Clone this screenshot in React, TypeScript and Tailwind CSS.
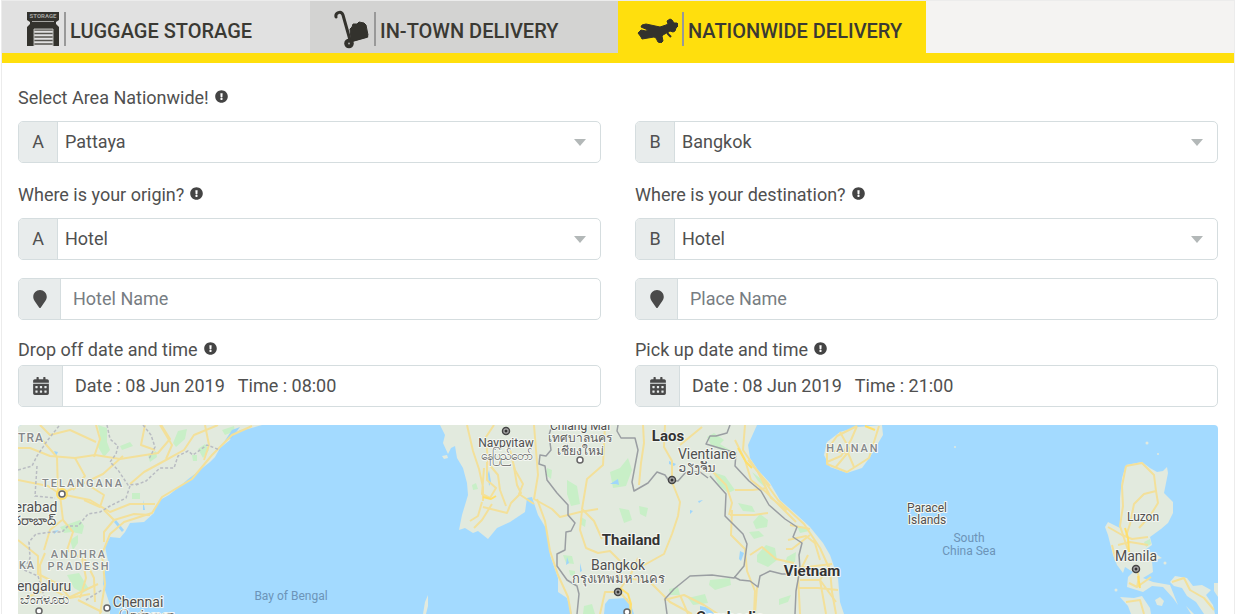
import type { ReactNode } from "react";
import { FaCalendarAlt, FaExclamationCircle, FaMapMarker } from "react-icons/fa";

function StorageIcon() {
  return (
    <svg width="34" height="36" viewBox="0 0 34 36" aria-hidden="true" className="-mt-1">
      <path d="M1 1h32v8l-3 2v2l3 3v19h-6V18H8v17H1V16l3-3v-2l-3-2z" fill="#33322d" />
      <path d="M6 10.500h22" stroke="#a5a5a2" strokeWidth="1" />
      <path d="M8 19h19M8 22.500h19M8 26h19M8 29.500h19M8 33h19" stroke="#55544f" strokeWidth="1.500" />
      <path d="M8 35V18h19v17" fill="none" stroke="#b9b9b6" strokeWidth="1" />
      <text x="17" y="7" textAnchor="middle" fontSize="6" fontWeight="700" fill="#a5a5a2">
        STORAGE
      </text>
    </svg>
  );
}

function TrolleyIcon() {
  return (
    <svg width="36" height="39" viewBox="0 0 36 39" aria-hidden="true" className="-mt-1">
      <path d="M2 7C1 3 7 0 9 5l7 25" fill="none" stroke="#33322d" strokeWidth="3" strokeLinecap="round" />
      <path d="M17 31l16-4.500" stroke="#33322d" strokeWidth="2.500" strokeLinecap="round" />
      <path d="M16 19l2-2 1-3 4 0 2-2 5 1 2 2 2 10-1 2-14 4-2-2z" fill="#33322d" stroke="#33322d" strokeLinejoin="round" />
      <circle cx="15" cy="33.500" r="4.800" fill="#33322d" />
      <circle cx="15" cy="33.500" r="1" fill="#a9a9a6" />
    </svg>
  );
}

function PlaneIcon() {
  return (
    <svg width="42" height="28" viewBox="0 0 42 28" aria-hidden="true" className="-mt-1">
      <path
        d="M2 18l3-3 5 1 2-1-7-3 1-2 4-1 14 3 6-2 2-1-1-3 3-2 2 1 2 3 3 0 2 2-3 3-1 3-2 1-3-1-7 4-1 1 1 5-2 2-3-1-2-4-2-1-12 2-1-2z"
        fill="#33322d"
        stroke="#33322d"
        strokeLinejoin="round"
      />
      <path d="M31 16l1 3 3 3" fill="none" stroke="#33322d" strokeWidth="2" />
    </svg>
  );
}

const tabs = [
  { title: "LUGGAGE STORAGE", icon: <StorageIcon />, style: "bg-[#e1e1e1] pl-6", active: false },
  { title: "IN-TOWN DELIVERY", icon: <TrolleyIcon />, style: "bg-[#d3d3d2] pl-6", active: false },
  { title: "NATIONWIDE DELIVERY", icon: <PlaneIcon />, style: "bg-[#ffdf0d] pl-[18px]", active: true },
];

function FieldLabel({ htmlFor, children }: { htmlFor: string; children: ReactNode }) {
  return (
    <label htmlFor={htmlFor} className="flex h-6 items-center gap-1.5">
      {children}
      <FaExclamationCircle className="mb-1 size-[13px] text-[#444]" />
    </label>
  );
}

function Group({ addon, width, children }: { addon: ReactNode; width: string; children: ReactNode }) {
  return (
    <div className="flex h-[42px] overflow-hidden rounded-[5px] border border-[#d5dddf] bg-white">
      <span className={`${width} flex shrink-0 items-center justify-center border-r border-[#d5dddf] bg-[#e8ecec]`}>
        {addon}
      </span>
      {children}
    </div>
  );
}

function SelectBox({ id, letter, label, options }: { id: string; letter: string; label?: string; options: string[] }) {
  return (
    <Group addon={letter} width="w-[39px]">
      <div className="relative flex-1">
        <select id={id} aria-label={label} className="h-full w-full appearance-none bg-transparent pr-10 pl-[7px] outline-none">
          {options.map((o) => (
            <option key={o}>{o}</option>
          ))}
        </select>
        <svg className="pointer-events-none absolute top-4 right-[14px]" width="12" height="8" viewBox="0 0 12 8" aria-hidden="true">
          <path d="M0 1h12L6 8z" fill="#b3b8b8" />
        </svg>
      </div>
    </Group>
  );
}

function PlaceInput({ label }: { label: string }) {
  return (
    <Group addon={<FaMapMarker className="size-[18px] text-[#4a4a4a]" />} width="w-[42px]">
      <input type="text" aria-label={label} placeholder={label} className="min-w-0 flex-1 px-3 outline-none placeholder:text-[#777d82]" />
    </Group>
  );
}

function DateInput({ id, value }: { id: string; value: string }) {
  return (
    <Group addon={<FaCalendarAlt className="size-[18px] text-[#4a4a4a]" />} width="w-[44px]">
      <input id={id} type="text" defaultValue={value} className="min-w-0 flex-1 px-3 outline-none" />
    </Group>
  );
}

const greens = [
  "M98 425l9 3 0 14 3 8-6 7-6-10 2-12z",
  "M120 446l10-4 3 4-11 4z",
  "M148 455l8-4 1 6-7 5z",
  "M173 443l5-12 9-2-2 10-9 8z",
  "M198 449l7-5 4 6-6 8z",
  "M222 430l12-4 1 5-10 4z",
  "M132 493l8 0 0 6-8 0z",
  "M60 527l20-7 4 6-2 8-10-2-8 1z",
  "M70 540l8-5 0 8-5 7z",
  "M67 575l12-2 10 16-6 4-9-5z",
  "M192 455l5 0 0 6-4 0z",
  "M567 480l10 6 3 18-9 2-4-12z",
  "M610 472l10-4 8-10 4 12-6 16-13 2z",
  "M547 468l5 2-1 9-5-4z",
  "M581 517l5 3-1 7-5-3z",
  "M619 508l10 2 3 10-8 3z",
  "M639 506l9 2-2 9-6-3z",
  "M563 555l9 1 2 8-8-1z",
  "M569 570l6 1 0 6-5-2z",
  "M584 606l8-2 3 10h-12z",
  "M472 485l4-2 2 6-5 1z",
  "M707 437l7-4 10 7-4 4 13 8-4 2-18-9z",
  "M713 472l12 4 10 14-7 3-10-9z",
  "M738 503l14 3 3 6-12-1z",
  "M753 522l7-8 8 6-1 7-11 2z",
  "M749 532l10-1 5 5-10 3z",
  "M757 555l9-10 9 3 2 12-9 7-11-5z",
  "M710 580l20-2 1 7-16 5-6-5z",
  "M669 589l9-2 2 8-10 0z",
  "M688 598l17-4 3 9-15 2z",
  "M779 599l12-4-3 7-9 3z",
  "M797 526l9 1 3 4-9 2z",
  "M752 472l13 10 2 7-9-8z",
  "M796 552l-9 5-2 6 10-1z",
  "M1144 542l6-3 1 5-5 3z",
];

const roads = [
  "M18 480l30 6 12 8 30 6 20 12 20-8 25 0",
  "M60 495l3 25 10 12-6 18 15 8 4 20-6 20",
  "M18 540l20 16 0 18 20 10 12 14 20-4",
  "M18 448l12 0 20 8 25 2 20-3 25 4 38-6 12-14-10-16",
  "M37 434l12 14 8 9 1 37M75 458l10 18-12 14M96 425l4 14-6 18M40 425l10 10 20-5 26 12",
  "M61 494l42-20 20-18M88 485l16 10-4 12-16-7",
  "M100 614l5-30-3-30 8-20 14-12 28-9 10-16 30-18 20-24 20-20 20-9",
  "M104 510l10 10 20-6 16 1M114 520l-10 12 0 10M130 484l14-12 22-12 18-10 10-15 24-10",
  "M145 425l-4 20 14 5M160 425l12 20-6 14M205 425l4 20-5 15M78 600l24 12M20 600l30-12 18 10 30-14",
  "M45 553l-5 12 1 20M62 520l-12 10-6 20M84 558l10 20 1 24",
  "M467 425l6 26 6 18 4 18 0 14M484 468l-2 26 8 4 6-10-9-8 0-18M494 425l-8 12 2 26 10 12 2 15 6 16M514 467l3 18 4 8-10 10-4 10-24-6",
  "M510 450l5 20 8 14-4 10 15 10M534 425l4 50-4 24 18 10 8 8 20-5 18-3",
  "M482 502l-4 14-8 5M492 504l-10 16-8 8M537 499l8 22 5 30 8 24 10 22 3 17",
  "M605 425l-2 40-16 14-5 30 12 12 8 18M582 510l-2 20 6 18 12 5 12-2 10 10 0 20",
  "M672 482l8 20-2 14-6 18-8 20-18 10-12 4M618 592l10-14 22 4 20 20 22 12M638 558l-8 18",
  "M643 425l1 18-3 20-2 22M665 425l-1 22 8 14 0 20M680 445l22-18",
  "M706 465l20 20 6 18-3 12M730 515l24 0 14-2M732 510l-1 25 14 14 2 22 8 20-1 23",
  "M735 490l18 0 14-2M750 555l12-8 14 12 18 4",
  "M745 425l-2 25 15 22 20 28 26 24 16 24 10 22 2 22 4 22",
  "M735 440l10 20 6 20 15 12 16 16 14 14M748 460l22 26M757 470l14 28 16 12",
  "M790 525l20 4M788 540l18-4 10 8M810 535l-18 14-6 0M798 568l34-4M808 555l-10 20 2 39M798 588l20 0 20 2M800 580l20 0 16 22M830 564l-10 16 6 34M814 540l6 20",
  "M664 600l20-5 20 10 14 9M680 595l8 19M757 587l-2 27M600 614l5-22 15 0 10 12 1 10",
  "M827 462l14-6 10-16 6-14M840 432l10 18-15 18M826 450l22 3 6 14M857 426l-20 10-10 14 0 14 20 8 22-14 10-32",
  "M1126 466l16-3 12 12 2 16 2 12-8 13-11 12M1156 491l-12 3-10 10-4 20-4 12",
  "M1126 466l-4 20 1 20-3 20 4 12 4 12",
  "M1108 527l14 8 10 4 16-2M1112 545l4 16M1118 545l12-3 18 3M1135 565l4 12-2 10-8-4M1137 587l14-10",
  "M1172 582l12-4 6 12 14 8 10 12M1126 602l14-2 4 14",
];

const borders = [
  "M552 425l-3 10 2 15-5 6-6-1-1 9 6 2 2 14 10 13 11 12 0 10 7 8-4 8-5 1-1 18-8 4 0 12 10 14 10 6 2 8-2 20",
  "M618 425l-1 6 4 7 14 0 3 12-6 32 2 9 14-8 9-11 8 3 4 6 9 0 8-9 14 0 8 6",
  "M730 425l-3 8-11 3-6 0-4 8 30 9-1 13 14 15 12 10 8 14 16 14 12 8-4 10 9 6-3 12 1 14-4 22-1 23",
  "M710 476l16 18-1 22 10 10 8 8 4 10-3 22-10 12-22-3-22 1-16 13-9 10 2 15",
  "M734 577l6 3 10 1 8 6 2-11 10-5 12 3 10 0",
];

const indianBorders = [
  "M18 470l14-4 5-10 10-15 12-15M37 466l-2 30 20 2M107 425l3 14 8 7-2 8-6 8 8 8 10 15 10-1",
  "M136 485l10-4 14-13 14 0 4-12 10-5 5 4 14-10 13 5",
  "M130 486l-4 12-16 8-10 6-12 2-10 12-10 0-6 6-10 0-16 2-7 8 1 16-6 12 14 6 6 20",
  "M143 425l8 10 4 12-6 12M86 600l16-10",
];

type MapLabel = { x: number; y: number; text: string; size: number; fill: string; weight?: number; spacing?: number };

const labels: MapLabel[] = [
  { x: 31, y: 442, text: "TRA", size: 12, fill: "#85888a", spacing: 1, weight: 500 },
  { x: 83, y: 487, text: "TELANGANA", size: 11, fill: "#85888a", spacing: 2, weight: 500 },
  { x: 79, y: 558, text: "ANDHRA", size: 11, fill: "#85888a", spacing: 2, weight: 500 },
  { x: 79, y: 570, text: "PRADESH", size: 11, fill: "#85888a", spacing: 2, weight: 500 },
  { x: 27, y: 569, text: "KA", size: 11, fill: "#85888a", spacing: 1, weight: 500 },
  { x: 36, y: 512, text: "erabad", size: 14, fill: "#505050" },
  { x: 27, y: 525, text: "హైదరాబాద్", size: 13, fill: "#505050" },
  { x: 44, y: 591, text: "engaluru", size: 14, fill: "#505050" },
  { x: 44, y: 604, text: "ಬೆಂಗಳೂರು", size: 13, fill: "#505050" },
  { x: 138, y: 607, text: "Chennai", size: 14, fill: "#505050" },
  { x: 146, y: 619, text: "சென்னை", size: 13, fill: "#505050" },
  { x: 291, y: 600, text: "Bay of Bengal", size: 12, fill: "#6c94b8" },
  { x: 506, y: 447, text: "Naypyitaw", size: 12, fill: "#505050" },
  { x: 506, y: 460, text: "နေပြည်တော်", size: 12, fill: "#606060" },
  { x: 580, y: 430, text: "Chiang Mai", size: 12, fill: "#505050" },
  { x: 580, y: 442, text: "เทศบาลนคร", size: 12, fill: "#606060" },
  { x: 580, y: 455, text: "เชียงใหม่", size: 12, fill: "#606060" },
  { x: 668, y: 441, text: "Laos", size: 15, fill: "#333333", weight: 700 },
  { x: 707, y: 459, text: "Vientiane", size: 14, fill: "#505050" },
  { x: 697, y: 472, text: "ວຽງຈັນ", size: 12, fill: "#606060" },
  { x: 631, y: 545, text: "Thailand", size: 15, fill: "#333333", weight: 700 },
  { x: 618, y: 570, text: "Bangkok", size: 14, fill: "#505050" },
  { x: 618, y: 583, text: "กรุงเทพมหานคร", size: 13, fill: "#606060" },
  { x: 812, y: 576, text: "Vietnam", size: 15, fill: "#333333", weight: 700 },
  { x: 730, y: 622, text: "Cambodia", size: 15, fill: "#333333", weight: 700 },
  { x: 853, y: 452, text: "HAINAN", size: 11, fill: "#85888a", spacing: 2, weight: 500 },
  { x: 927, y: 512, text: "Paracel", size: 12, fill: "#505050" },
  { x: 927, y: 524, text: "Islands", size: 12, fill: "#505050" },
  { x: 969, y: 542, text: "South", size: 12, fill: "#6c94b8" },
  { x: 969, y: 555, text: "China Sea", size: 12, fill: "#6c94b8" },
  { x: 1143, y: 521, text: "Luzon", size: 12, fill: "#505050" },
  { x: 1136, y: 561, text: "Manila", size: 14, fill: "#505050" },
];

const capitals = [[506, 431], [672, 480], [618, 592], [1136, 569]];
const cities = [[62, 494], [107, 608], [39, 611], [580, 460], [627, 612]];

function DeliveryMap() {
  return (
    <svg
      className="block w-full rounded-t-[4px] bg-[#a3daff]"
      viewBox="18 425 1200 189"
      role="img"
      aria-label="Delivery area map"
      fontFamily='Roboto, "Noto Sans", "DejaVu Sans", sans-serif'
    >
      <g fill="#e2eade">
        <path d="M18 425h244l-14 4-8 1-8 5-2 5-10 8-5 9-5 5-10 8-13 10-8 7-10 8-9 5-5 8-1 5-10 9-14 1-5 9-5 6-10-1-5 10 3 14-4 13-1 10 3 9 4 12v9H18z" />
        <path d="M440 425L445 435L443 443L448 454L451 448L455 446L457 458L463 468L467 483L468 495L462 515L459 530L465 528L473 533L478 531L488 539L497 528L510 522L525 512L527 498L532 497L538 515L547 530L550 555L558 578L558 592L567 598L572 614H604L605 604L609 599L627 598L631 605L634 614H844L840 602L838 578L830 555L823 543L810 527L797 515L780 500L770 483L758 470L750 458L748 445L757 425Z" />
        <path d="M824 455l3-13 13-10 17-5 25-2 1 10-6 10-7 12-8 11-15 5-17-6z" />
        <path d="M1126 465L1142 462L1150 468L1157 472L1163 471L1167 467L1168 473L1164 493L1173 502L1173 513L1168 523L1161 529L1150 537L1152 545L1145 550L1154 553L1162 558L1152 561L1153 572L1143 578L1153 582L1170 585L1178 605L1173 598L1163 587L1152 586L1143 592L1127 587L1128 577L1133 572L1125 567L1123 573L1117 565L1113 555L1108 535L1105 527L1108 522L1120 528L1120 498L1122 478Z" />
        <path d="M1170 582l5-6 12 2 6 8 9-1 9 5-5 5 7 10 2 9h-11l-8-12-9-6-5-8-8-2z" />
        <path d="M1120 597l14 1 8-2 8 12 1 6h-20l-3-8zM1155 600l5-3 4 4-2 5-5-1zM1214 583h4v14l-4-6zM423 614l2-12 3-7v11l-2 8zM442 456l5-1 1 3-4 1zM1186 606l8 8h-3z" />
      </g>
      <g fill="#c8efc7">
        {greens.map((d) => (
          <path key={d} d={d} />
        ))}
      </g>
      <g fill="#9fd6fb">
        <path d="M54 451l4 1-2 4zM53 531l6-1-5 4zM116 520l8 10-2 2-8-10zM143 500l2 10-2 0zM489 470l2 12-2 4-1-12zM610 484l8-5 1 6-3-1zM669 461l7 3-2 2-5-2zM700 606l10 2 4 6h-14zM740 551l4 2-3 8-2-2zM567 557l2 6-3 2zM690 510l3 1-3 3zM580 563l2 8-2 1zM698 501l5-1-4 3zM232 430l8-3-8 11-8 4z" />
      </g>
      <g fill="none" stroke="#f3e09a" strokeWidth="2" strokeLinejoin="round">
        {roads.map((d) => (
          <path key={d} d={d} />
        ))}
      </g>
      <g fill="none" stroke="#ffdf6b" strokeWidth="2" strokeLinejoin="round">
        <path d="M738 448l8 14 6 6M620 588l8 6 3 10-1 10M1125 528l3 10 1 14M1138 576l2 12M483 497l8 2 5-3M865 426l10 4" />
        <circle cx="62" cy="494" r="5" />
      </g>
      <g fill="none" stroke="#9a9ea2" strokeWidth="1.500" strokeLinejoin="round">
        {borders.map((d) => (
          <path key={d} d={d} />
        ))}
      </g>
      <g fill="none" stroke="#b9bcc2" strokeWidth="1.500" strokeDasharray="3 2">
        {indianBorders.map((d) => (
          <path key={d} d={d} />
        ))}
      </g>
      <g fill="#e2eade">
        <circle cx="1147" cy="443" r="1.500" />
        <circle cx="1158" cy="454" r="1" />
        <circle cx="955" cy="447" r="1" />
        <circle cx="1116" cy="590" r="1.500" />
        <circle cx="1165" cy="563" r="1.500" />
      </g>
      {cities.map(([x, y]) => (
        <circle key={x} cx={x} cy={y} r="3" fill="#fff" stroke="#666" strokeWidth="1.500" />
      ))}
      {capitals.map(([x, y]) => (
        <g key={x}>
          <circle cx={x} cy={y} r="3.500" fill="#aaa" stroke="#444" strokeWidth="1.500" />
          <circle cx={x} cy={y} r="1.500" fill="#333" />
        </g>
      ))}
      {labels.map((l) => (
        <text
          key={l.text}
          x={l.x}
          y={l.y}
          textAnchor="middle"
          fontSize={l.size}
          fontWeight={l.weight ?? 400}
          letterSpacing={l.spacing ?? 0}
          fill={l.fill}
          stroke={l.fill === "#6c94b8" ? "none" : "#f4f7f2"}
          strokeWidth="2"
          strokeLinejoin="round"
          paintOrder="stroke"
        >
          {l.text}
        </text>
      ))}
    </svg>
  );
}

export default function App() {
  return (
    <div className="mx-px overflow-hidden border-x border-t border-[#ececec] bg-white font-[Roboto,sans-serif] text-lg leading-6 text-[#505050]">
      <nav role="tablist" className="grid grid-cols-4 border-b-10 border-[#ffdf0d] bg-[#f4f3f2]">
        {tabs.map((tab) => (
          <button
            key={tab.title}
            type="button"
            role="tab"
            aria-selected={tab.active}
            className={`${tab.style} flex h-[52px] items-center gap-1 pt-2 text-xl font-medium whitespace-nowrap text-[#3a3933]`}
          >
            {tab.icon}
            <span className="-mt-1 h-[34px] w-0.5 shrink-0 bg-[#999]" />
            {tab.title}
          </button>
        ))}
      </nav>

      <form className="px-4 pt-[23px]">
        <div className="grid grid-cols-2 gap-x-[34px]">
          <div className="col-span-2 mb-[11px]">
            <FieldLabel htmlFor="area-from">Select Area Nationwide!</FieldLabel>
          </div>
          <SelectBox id="area-from" letter="A" options={["Pattaya", "Bangkok"]} />
          <SelectBox id="area-to" letter="B" label="Destination area" options={["Bangkok", "Pattaya"]} />
        </div>

        <div className="mt-5 grid grid-cols-2 gap-x-[34px]">
          <div className="flex flex-col gap-[11px]">
            <FieldLabel htmlFor="origin">Where is your origin?</FieldLabel>
            <SelectBox id="origin" letter="A" options={["Hotel", "Airport"]} />
          </div>
          <div className="flex flex-col gap-[11px]">
            <FieldLabel htmlFor="destination">Where is your destination?</FieldLabel>
            <SelectBox id="destination" letter="B" options={["Hotel", "Airport"]} />
          </div>
        </div>

        <div className="mt-[18px] grid grid-cols-2 gap-x-[34px]">
          <PlaceInput label="Hotel Name" />
          <PlaceInput label="Place Name" />
        </div>

        <div className="mt-[18px] grid grid-cols-2 gap-x-[34px]">
          <div className="flex flex-col gap-[3px]">
            <FieldLabel htmlFor="drop-off">Drop off date and time</FieldLabel>
            <DateInput id="drop-off" value="Date : 08 Jun 2019   Time : 08:00" />
          </div>
          <div className="flex flex-col gap-[3px]">
            <FieldLabel htmlFor="pick-up">Pick up date and time</FieldLabel>
            <DateInput id="pick-up" value="Date : 08 Jun 2019   Time : 21:00" />
          </div>
        </div>

        <div className="mt-[18px]">
          <DeliveryMap />
        </div>
      </form>
    </div>
  );
}
